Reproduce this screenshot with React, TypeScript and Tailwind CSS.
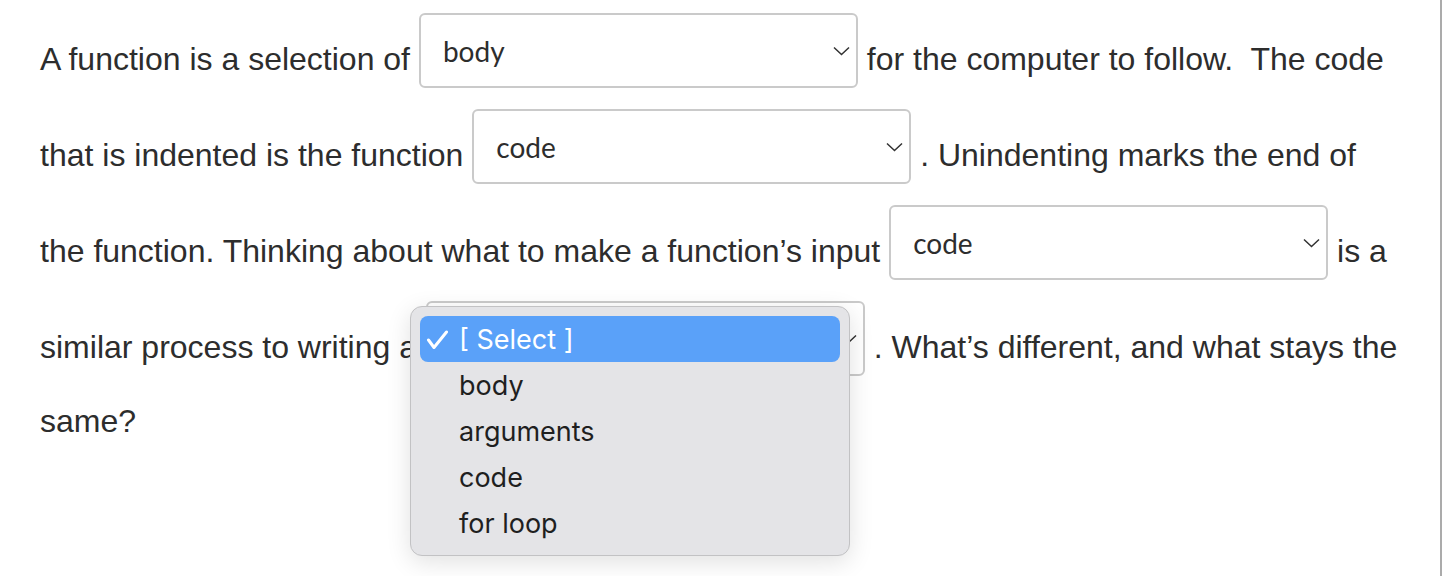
const menuItems = ['[ Select ]', 'body', 'arguments', 'code', 'for loop'];

function Chevron() {
    return (
        <svg width="17" height="10" viewBox="0 0 17 10" fill="none">
            <path d="M1 1.5 8.5 8.5 16 1.5" stroke="#333" strokeWidth="1.5" />
        </svg>
    );
}

function Dropdown({ value }: { value: string }) {
    return (
        <span className="mb-[21px] inline-block h-[75px] w-[439px] overflow-hidden rounded-[6px] border-2 border-[#cacaca] bg-white align-[-39px]">
            <span className="flex h-full items-center justify-between pt-[1px] pl-[22px] pr-[6px] font-['Lato',sans-serif] text-[28px] leading-none text-[#2d2d2d]">
                <span>{value}</span>
                <Chevron />
            </span>
        </span>
    );
}

function OpenMenu() {
    return (
        <div className="absolute left-[410px] top-[306px] flex h-[250px] w-[440px] flex-col rounded-[12px] border border-[#c2c2c4] bg-[#e4e4e7] p-[9px] shadow-[0_6px_24px_rgba(0,0,0,0.12)] font-['Inter',sans-serif] text-[27px] text-[#1f1f1f]">
            {menuItems.map((item, i) => (
                <div
                    key={item}
                    className={
                        i === 0
                            ? 'relative flex h-[46px] shrink-0 items-center rounded-[8px] bg-[#5aa1f9] pt-[3px] pl-[39px] text-white'
                            : 'flex h-[46px] shrink-0 items-center pt-[3px] pl-[39px]'
                    }
                >
                    {i === 0 && (
                        <svg className="absolute left-[6px] top-[14px]" width="24" height="20" viewBox="0 0 24 20" fill="none">
                            <path d="M2.5 10 8 17.5 20.5 2" stroke="white" strokeWidth="3" strokeLinecap="round" strokeLinejoin="round" />
                        </svg>
                    )}
                    {item}
                </div>
            ))}
        </div>
    );
}

export default function App() {
    return (
        <div className="relative h-[576px] w-[1442px] border-r-2 border-[#ababab] bg-white">
            <p className="px-[40px] pt-[13px] font-['Liberation_Sans',Arial,sans-serif] text-[32px] leading-[48px] text-[#2d2d2d]">
                A function is a selection of <Dropdown value="body" /> for the computer to follow.&nbsp; The code
                that is indented is the function <Dropdown value="code" /> . Unindenting marks the end of the
                function. Thinking about what to make a function’s input <Dropdown value="code" /> is a similar
                process to writing a <Dropdown value="[ Select ]" /> . What’s different, and what stays the same?
            </p>
            <OpenMenu />
        </div>
    );
}
